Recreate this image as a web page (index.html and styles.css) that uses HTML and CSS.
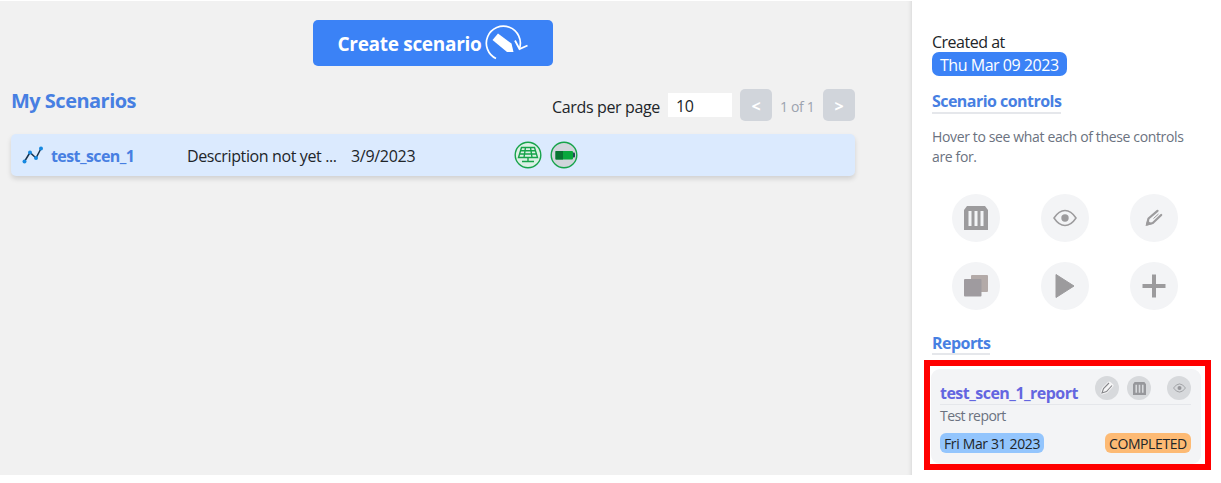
FILE: index.html
```html
<!DOCTYPE html>
<html lang="en">
<head>
<meta charset="utf-8">
<title>My Scenarios</title>
<link rel="stylesheet" href="styles.css">
</head>
<body>
<svg width="0" height="0" class="defs">
  <symbol id="trash" viewBox="0 0 24 24"><path fill="currentColor" fill-rule="evenodd" d="M3 0H21L24 4V24H0V4ZM4.500 5V20H7.500V5ZM10.500 5V20H13.500V5ZM16.500 5V20H19.500V5Z"/></symbol>
  <symbol id="eye" viewBox="0 0 24 18"><path fill="none" stroke="currentColor" stroke-width="1.500" d="M1 9Q6 1.500 12 1.500T23 9Q18 16.500 12 16.500T1 9Z"/><circle cx="12" cy="9" r="3.700" fill="currentColor"/></symbol>
  <symbol id="pencil" viewBox="0 0 20 18"><path fill="none" stroke="currentColor" stroke-width="2.200" stroke-linecap="round" stroke-linejoin="round" d="M13.500 1.800L4.500 9.500L3 15.500L8.800 14L17.200 6"/><path fill="currentColor" d="M1.500 17L3.500 10.500L5.500 13L8.500 15Z"/><path stroke="currentColor" stroke-width="1" d="M14.500 5L9.500 9.500"/></symbol>
</svg>
<div class="app">
  <main class="main">
    <button class="create"><span>Create scenario</span>
      <svg width="44" height="38" viewBox="0 0 44 38" fill="none" stroke="#fff"><path stroke-width="1.700" d="M12 35.500A17 17 0 1 1 35.500 25.500"/><path stroke-width="1.800" d="M31 17.500L35.500 26L43.500 22.500"/><path fill="#fff" stroke="none" d="M8.500 17L14 10.500L27.500 20.500L29.500 29H23Z"/></svg>
    </button>
    <div class="toolbar">
      <h1><span>My Scenarios</span></h1>
      <div class="pager">
        <label>Cards per page</label>
        <div class="count">10</div>
        <button class="nav">&lt;</button>
        <span class="pages">1 of 1</span>
        <button class="nav">&gt;</button>
      </div>
    </div>
    <div class="scenario">
      <svg class="chart" width="22" height="18" viewBox="0 0 22 18"><path fill="none" stroke="#17324d" stroke-width="1.500" d="M2.500 15.500L8 6.500L14 12L19 2.500"/><g fill="#1688e0"><circle cx="2.500" cy="15.500" r="2"/><circle cx="8" cy="6.500" r="2"/><circle cx="14" cy="12" r="2"/><circle cx="19" cy="2.500" r="2"/></g></svg>
      <span class="name">test_scen_1</span>
      <span class="desc">Description not yet ...</span>
      <span class="date">3/9/2023</span>
      <div class="assets">
        <svg width="28" height="28" viewBox="0 0 28 28" fill="none" stroke="#16a34a"><circle cx="14" cy="14" r="12.800" fill="#dcf0e5" stroke-width="1.400"/><path stroke-width="1.400" d="M7.500 6.500H20.500L23.500 16.500H4.500ZM6.500 9.800H21.500M5.500 13H22.500M11.500 6.500L10 16.500M16.500 6.500L18 16.500M14 16.500V20.500M8 20.500H20"/></svg>
        <svg width="28" height="28" viewBox="0 0 28 28"><circle cx="14" cy="14" r="12.800" fill="#d1d5db" stroke="#16a34a" stroke-width="1.400"/><rect x="22" y="11.500" width="3" height="5" rx="1" fill="#1f4b55"/><rect x="5.500" y="10" width="17.500" height="8.500" rx="1" fill="#09a83d"/><path fill="#087431" d="M5.500 10H13V18.500H5.500Z"/></svg>
      </div>
    </div>
  </main>
  <aside class="side">
    <div class="created"><span>Created at</span></div>
    <div class="created-date">Thu Mar 09 2023</div>
    <h2 class="controls-title">Scenario controls</h2>
    <p class="hint"><span class="hint-a">Hover to see what each of these controls</span><br><span class="hint-b">are for.</span></p>
    <div class="controls">
      <button><svg width="24" height="24"><use href="#trash"/></svg></button>
      <button><svg width="24" height="18"><use href="#eye"/></svg></button>
      <button><svg width="20" height="18"><use href="#pencil"/></svg></button>
      <button><svg width="24" height="22" viewBox="0 0 24 22"><rect x="7" width="17" height="17" rx="1" fill="#b3aaa8"/><rect y="4" width="17.500" height="17.500" rx="1" fill="#9f9b9f"/></svg></button>
      <button><svg width="20" height="24" viewBox="0 0 20 24"><path fill="currentColor" stroke="currentColor" stroke-linejoin="round" d="M1 .5L19 12L1 23.500Z"/></svg></button>
      <button><svg width="24" height="24" viewBox="0 0 24 24"><path fill="none" stroke="currentColor" stroke-width="4" d="M12 .5V23.500M.5 12H23.500"/></svg></button>
    </div>
    <h2 class="reports-title">Reports</h2>
    <div class="highlight">
      <div class="report">
        <div class="report-head">
          <span class="report-name">test_scen_1_report</span>
          <div class="report-actions">
            <button class="edit"><svg width="14" height="14" viewBox="0 0 14 14"><path fill="#f5f5f6" stroke="#f5f5f6" stroke-width="3" stroke-linejoin="round" d="M2 12L3.500 7.500L9 2L12 4.500L6.500 10.500Z"/><path fill="none" stroke="#85868a" stroke-width="1.100" d="M9 2L3.500 7.500L2 12L6.500 10.500L12 4.500"/></svg></button>
            <button><svg width="13" height="13"><use href="#trash"/></svg></button>
            <button class="view"><svg width="13" height="10"><use href="#eye"/></svg></button>
          </div>
        </div>
        <div class="report-desc"><span>Test report</span></div>
        <div class="report-foot"><span class="tag day">Fri Mar 31 2023</span><span class="tag status">COMPLETED</span></div>
      </div>
    </div>
  </aside>
</div>
</body>
</html>
```
FILE: styles.css
```css
* { box-sizing: border-box; }
body { margin: 0; background: #fff; font: 16px/24px "Open Sans", "Noto Sans", sans-serif; color: #212529; }
button { border: 0; padding: 0; font: inherit; color: inherit; display: flex; align-items: center; justify-content: center; }
h1, h2, p { margin: 0; }
span, label { white-space: nowrap; }
.defs { display: block; position: absolute; }
.app { display: flex; height: 475px; padding-top: 1px; }
.main { width: 912px; background: #f1f1f1; padding: 19px 57px 0 11px; box-shadow: inset -5px 0 5px -5px #ccc; }
.create { width: 240px; height: 46px; margin: 0 auto; border-radius: 5px; background: #3b82f6; color: #fff; font-weight: 700; font-size: 19px; gap: 4px; letter-spacing: -.3px; }
.create span { padding-top: 2px; }
.create svg { margin: -3px 0 0 -1px; }
.toolbar { display: flex; justify-content: space-between; height: 32px; margin-top: 23px; }
h1 { font-size: 20px; line-height: 24px; color: #477fe2; letter-spacing: -.52px; }
.pager { display: flex; align-items: center; gap: 8px; letter-spacing: -.35px; }
.pager label { padding-top: 3px; }
.count { width: 64px; height: 24px; background: #fff; padding-left: 8px; line-height: 27px; }
.nav { width: 32px; height: 32px; border-radius: 5px; background: #d1d5db; color: #fff; font-weight: 700; padding-top: 1px; }
.pages { width: 35px; font-size: 14px; color: #9ca3af; padding-top: 3px; }
.scenario { display: flex; align-items: center; height: 42px; margin-top: 13px; padding-left: 11px; border-radius: 5px; background: #dbeafe; box-shadow: 0 3px 5px #0002; }
.scenario > span { padding-top: 2px; }
.name { margin-left: 7px; width: 136px; color: #477fe2; font-weight: 700; letter-spacing: -.58px; }
.desc { width: 164px; letter-spacing: -.38px; }
.date { width: 163px; letter-spacing: -.3px; }
.assets { display: flex; gap: 8px; }
.side { flex: 1; padding: 28px 0 0 20px; }
.created { height: 23px; line-height: 26px; letter-spacing: -.5px; }
.created-date { width: 135px; height: 24px; padding-left: 8px; border-radius: 7px; background: #3b82f6; color: #fff; line-height: 27px; letter-spacing: -.47px; white-space: nowrap; }
h2 { width: fit-content; height: 24px; border-bottom: 2px solid #e5e7eb; color: #477fe2; font-size: 16px; letter-spacing: -.54px; line-height: 23px; }
.controls-title { margin-top: 14px; }
.hint { margin-top: 13px; height: 40px; font-size: 14px; line-height: 20px; color: #6b7280; letter-spacing: -.36px; }
.controls { display: grid; grid-template-columns: repeat(3, 48px); column-gap: 41px; row-gap: 20px; margin: 27px 0 0 20px; }
.controls button { width: 48px; height: 48px; border-radius: 50%; background: #f3f4f6; color: #9c9b9d; }
.reports-title { margin-top: 21px; line-height: 24px; }
.highlight { width: 287px; height: 110px; margin: 5px 0 0 -8px; border: 6px solid #f00; padding: 3px 4px 0 1px; }
.report { height: 95px; border-radius: 9px; background: #f3f4f6; padding: 7px 10px 0 9px; }
.report-head { display: flex; justify-content: space-between; height: 29px; border-bottom: 1px solid #e5e7eb; }
.report-name { padding-top: 5px; color: #6366e0; font-weight: 700; letter-spacing: -.52px; }
.report-actions { display: flex; gap: 8px; }
.report-actions button { width: 24px; height: 24px; border-radius: 50%; background: #d7d9dc; color: #96979b; }
.report-actions .view { margin-left: 8px; }
.report-desc { height: 20px; font-size: 14px; line-height: 22px; color: #6b7280; letter-spacing: -.58px; }
.report-foot { display: flex; justify-content: space-between; margin-top: 8px; }
.tag { height: 20px; border-radius: 6px; padding-left: 4px; font-size: 14px; line-height: 21px; }
.day { width: 104px; background: #93c5fd; letter-spacing: -.36px; }
.status { width: 86px; background: #fdba74; letter-spacing: -.4px; }
```
